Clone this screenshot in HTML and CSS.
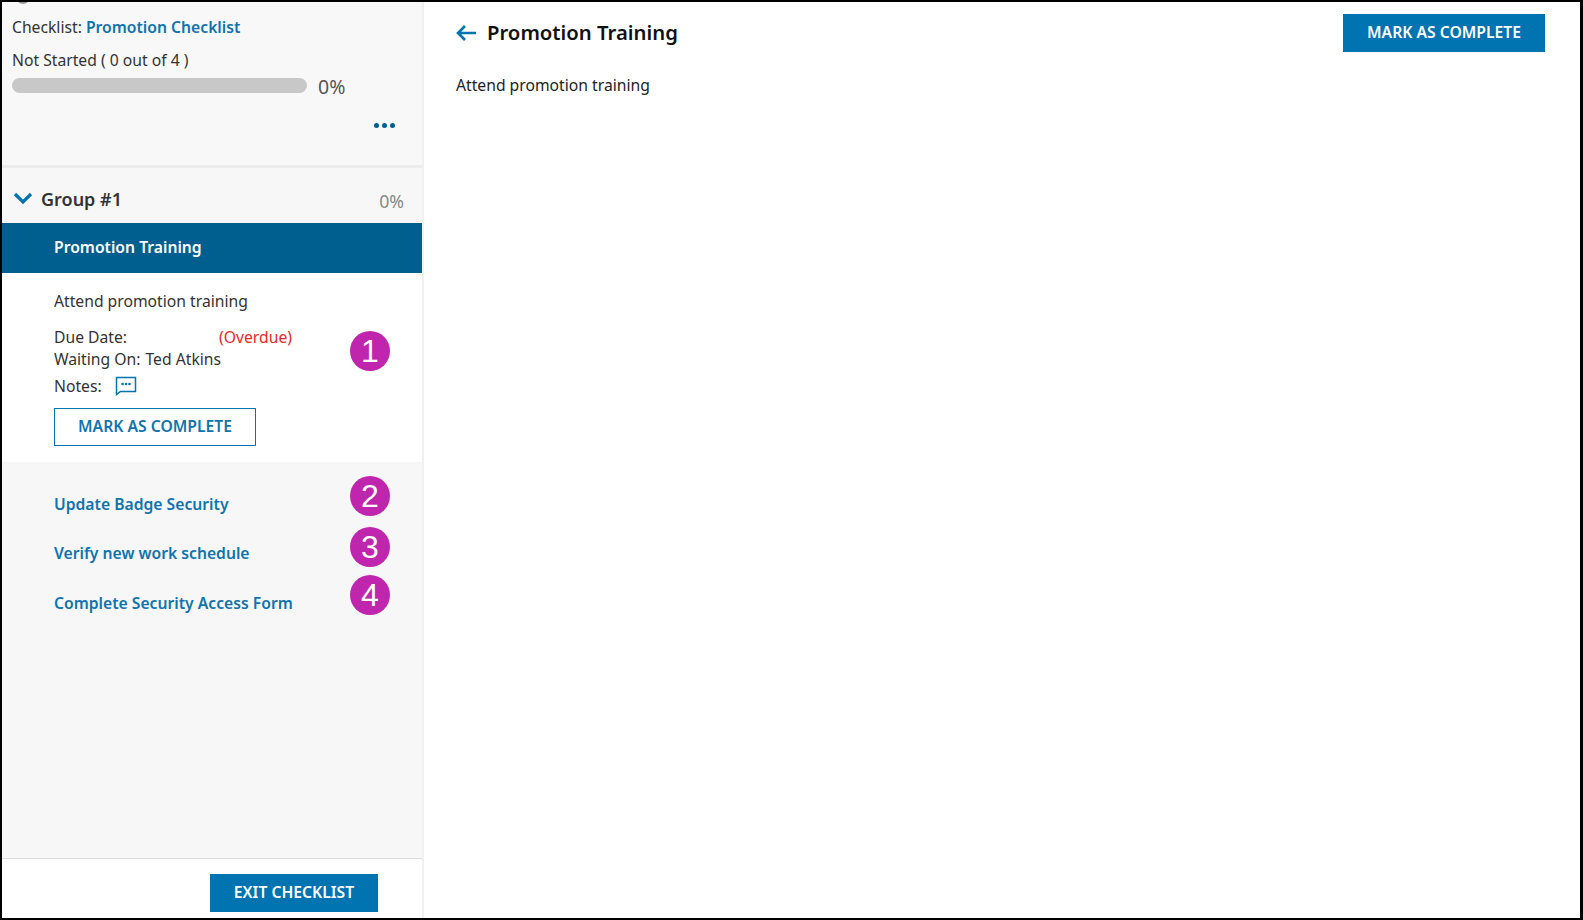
FILE: index.html
```html
<!DOCTYPE html>
<html lang="en">
<head>
  <meta charset="UTF-8">
  <title>Promotion Training</title>
  <link rel="stylesheet" href="styles.css">
</head>
<body>
  <div class="frame">
    <div class="sidebar">
      <div class="summary">
        <span class="avatar-edge"></span>
        <div class="checklist-name">Checklist: <a class="link">Promotion Checklist</a></div>
        <div class="status">Not Started ( 0 out of 4 )</div>
        <div class="progress">
          <div class="progress-bar"></div>
          <span class="progress-pct">0%</span>
        </div>
        <div class="more"><i></i><i></i><i></i></div>
      </div>

      <div class="tasks">
        <div class="group-head">
          <svg class="chevron" width="20" height="13" viewBox="0 0 20 13"><path d="M2 2l8 8 8-8" fill="none" stroke="#0073b1" stroke-width="3.2"/></svg>
          <span class="group-name">Group #1</span>
          <span class="group-pct">0%</span>
        </div>
        <div class="task-active">Promotion Training</div>
        <div class="task-detail">
          <div class="detail-text">Attend promotion training</div>
          <div class="detail-row">
            <span class="due-label">Due Date:</span>
            <span class="overdue">(Overdue)</span>
          </div>
          <div class="detail-row"><span class="waiting-label">Waiting On:</span> Ted Atkins</div>
          <div class="notes-row">
            <span>Notes:</span>
            <svg width="22" height="20" viewBox="0 0 22 20"><path d="M1.5 1.5h19v14h-15l-4 3z" fill="none" stroke="#0073b1" stroke-width="1.5"/><circle cx="7.5" cy="8" r="1.3" fill="#0073b1"/><circle cx="11" cy="8" r="1.3" fill="#0073b1"/><circle cx="14.5" cy="8" r="1.3" fill="#0073b1"/></svg>
          </div>
          <button class="btn btn-outline">MARK AS COMPLETE</button>
          <span class="badge badge-1">1</span>
        </div>
        <div class="task-list">
          <a class="task-link">Update Badge Security</a>
          <a class="task-link">Verify new work schedule</a>
          <a class="task-link">Complete Security Access Form</a>
          <span class="badge badge-2">2</span>
          <span class="badge badge-3">3</span>
          <span class="badge badge-4">4</span>
        </div>
      </div>

      <div class="sidebar-foot">
        <button class="btn btn-solid">EXIT CHECKLIST</button>
      </div>
    </div>

    <div class="main">
      <div class="main-head">
        <svg class="back" width="22" height="18" viewBox="0 0 22 18"><path d="M21 9H3M10 2L3 9l7 7" fill="none" stroke="#0073b1" stroke-width="2.6"/></svg>
        <h1>Promotion Training</h1>
        <button class="btn btn-solid btn-right">MARK AS COMPLETE</button>
      </div>
      <div class="main-text">Attend promotion training</div>
    </div>
  </div>
</body>
</html>
```

FILE: styles.css
```css
html, body {
  margin: 0;
  padding: 0;
  height: 100%;
  overflow: hidden;
}
body {
  font-family: "Noto Sans", "Open Sans", sans-serif;
  font-size: 15.7px;
  color: #333;
  background: #fff;
}
.frame {
  display: flex;
  box-sizing: border-box;
  width: 1583px;
  height: 920px;
  border: 2px solid #000;
  border-right-width: 3px;
}
.sidebar {
  display: flex;
  flex-direction: column;
  flex: none;
  width: 420px;
  border-right: 2px solid #f0f0f0;
}

/* top summary */
.summary {
  position: relative;
  overflow: hidden;
  box-sizing: border-box;
  height: 166px;
  padding: 13px 10px 0;
  background: #f8f8f8;
  border-bottom: 3px solid #ececec;
}
.avatar-edge {
  position: absolute;
  top: -12px;
  left: 14px;
  width: 14px;
  height: 14px;
  border-radius: 50%;
  background: #9a9a9a;
}
.checklist-name {
  line-height: 24px;
}
.link {
  color: #0f74ad;
  font-weight: 600;
}
.status {
  margin-top: 9px;
  line-height: 24px;
}
.progress {
  display: flex;
  align-items: flex-start;
  height: 26px;
}
.progress-bar {
  width: 295px;
  height: 15px;
  margin-top: 6px;
  border-radius: 8px;
  background: #c8c8c8;
}
.progress-pct {
  margin-left: 11px;
  font-size: 19.5px;
  line-height: 30px;
  color: #555;
}
.more {
  display: flex;
  justify-content: flex-end;
  gap: 3px;
  margin: 25px 17px 0 0;
}
.more i {
  width: 5px;
  height: 5px;
  border-radius: 50%;
  background: #005f8f;
}

/* task list */
.tasks {
  display: flex;
  flex-direction: column;
  flex: 1;
  background: #f7f7f7;
}
.group-head {
  display: flex;
  align-items: center;
  height: 55px;
  padding: 6px 18px 0 11px;
  box-sizing: border-box;
}
.chevron {
  margin-right: 8px;
}
.group-name {
  font-size: 18px;
  font-weight: 600;
}
.group-pct {
  margin-left: auto;
  padding-top: 4px;
  font-size: 17.7px;
  color: #888;
}
.task-active {
  height: 50px;
  padding-left: 52px;
  line-height: 48px;
  font-weight: 600;
  color: #fff;
  background: #005f8f;
}
.task-detail {
  position: relative;
  height: 189px;
  box-sizing: border-box;
  padding: 16px 0 0 52px;
  background: #fff;
}
.detail-text {
  line-height: 24px;
  margin-bottom: 13px;
}
.detail-row {
  line-height: 22px;
}
.due-label {
  display: inline-block;
  width: 161px;
}
.waiting-label {
  margin-right: 1px;
}
.overdue {
  color: #e8282c;
}
.notes-row {
  display: flex;
  align-items: center;
  gap: 13px;
  height: 30px;
  margin-top: 1px;
}
.task-list {
  position: relative;
  display: flex;
  flex-direction: column;
  flex: 1;
  padding: 30px 0 0 52px;
}
.task-link {
  height: 49.3px;
  line-height: 24px;
  font-weight: 600;
  color: #0f74ad;
}
.badge {
  position: absolute;
  left: 348px;
  width: 40px;
  height: 40px;
  border-radius: 50%;
  background: #c026ad;
  color: #fff;
  font-family: "Liberation Sans", Arial, sans-serif;
  font-size: 32px;
  line-height: 40px;
  text-align: center;
}
.badge-1 { top: 58px; }
.badge-2 { top: 14px; }
.badge-3 { top: 65px; }
.badge-4 { top: 113px; }

/* buttons */
.btn {
  box-sizing: border-box;
  height: 38px;
  padding: 0 0 2px;
  font-family: inherit;
  font-size: 15.7px;
  font-weight: 600;
  cursor: pointer;
}
.btn-outline {
  width: 202px;
  margin-top: 7px;
  color: #0f74ad;
  background: #fff;
  border: 1px solid #0073b1;
}
.btn-solid {
  width: 168px;
  color: #fff;
  background: #0073b1;
  border: none;
}

.sidebar-foot {
  display: flex;
  justify-content: flex-end;
  box-sizing: border-box;
  height: 60px;
  padding: 15px 44px 0 0;
  background: #fff;
  border-top: 1px solid #dcdcdc;
}

/* right side */
.main {
  flex: 1;
  padding: 12px 35px 0 32px;
}
.main-head {
  display: flex;
  align-items: center;
  height: 38px;
}
.back {
  margin: 0 10px 0 -1px;
}
.main-head h1 {
  margin: -2px 0 0;
  font-size: 20.3px;
  font-weight: 600;
  color: #111;
}
.btn-right {
  width: 202px;
  margin-left: auto;
}
.main-text {
  margin-top: 21px;
  line-height: 24px;
  color: #222;
}
```
